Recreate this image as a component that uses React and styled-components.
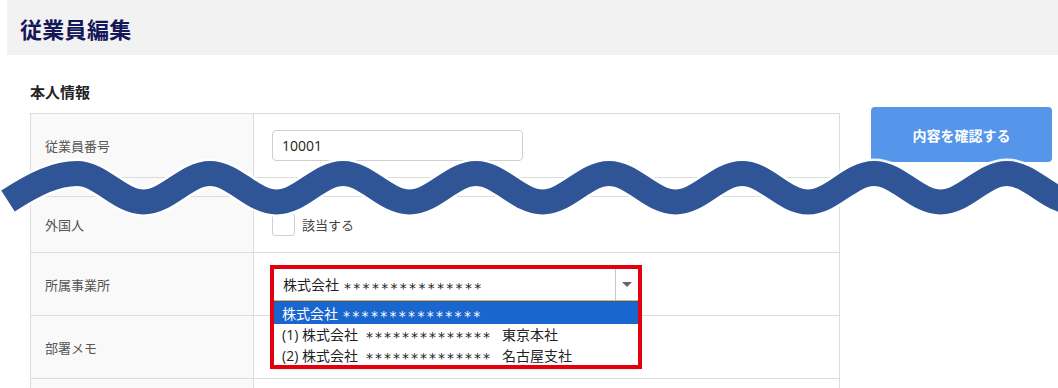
import React from "react";
import styled, { createGlobalStyle } from "styled-components";

const Global = createGlobalStyle`
  html, body { margin: 0; padding: 0; background: #fff; }
  body {
    font-family: "Open Sans", "Noto Sans CJK JP", sans-serif;
    color: #333;
    width: 1058px;
    height: 388px;
    overflow: hidden;
  }
  * { box-sizing: border-box; }
`;

const Page = styled.div`
  position: relative;
  width: 1058px;
  height: 388px;
  overflow: hidden;
`;

const Header = styled.header`
  margin-left: 7px;
  height: 55px;
  background: #f2f2f2;
  display: flex;
  align-items: center;
  padding-left: 13px;
`;

const Title = styled.h1`
  margin: 0;
  font-family: "Noto Sans CJK JP", sans-serif;
  font-size: 22px;
  font-weight: 700;
  color: #16165a;
  line-height: 1;
  letter-spacing: 0.3px;
`;

const Main = styled.main`
  display: flex;
  align-items: flex-start;
  padding-left: 30px;
`;

const FormColumn = styled.section`
  width: 810px;
`;

const SectionTitle = styled.h2`
  margin: 0;
  height: 58px;
  padding-top: 26px;
  font-family: "Noto Sans CJK JP", sans-serif;
  font-size: 15px;
  font-weight: 700;
  color: #222;
  line-height: 22px;
`;

const Table = styled.div`
  display: grid;
  grid-template-columns: 223px 1fr;
  border-left: 1px solid #dcdcdc;
  border-right: 1px solid #dcdcdc;
  border-top: 1px solid #dcdcdc;
`;

const Label = styled.div`
  height: ${(p) => p.$h}px;
  background: #f9f9f9;
  border-right: 1px solid #dcdcdc;
  border-bottom: 1px solid #dcdcdc;
  display: flex;
  align-items: center;
  padding-left: 14px;
  font-size: 13px;
  color: #555;
`;

const Value = styled.div`
  height: ${(p) => p.$h}px;
  border-bottom: 1px solid #dcdcdc;
  display: flex;
  align-items: center;
  padding-left: 18px;
  position: relative;
`;

const TextInput = styled.div`
  width: 251px;
  height: 31px;
  border: 1px solid #cfcfcf;
  border-radius: 4px;
  display: flex;
  align-items: center;
  padding-left: 9px;
  font-size: 14px;
  color: #222;
`;

const CheckRow = styled.label`
  display: flex;
  align-items: center;
  gap: 7px;
  font-size: 13px;
  color: #444;
`;

const CheckBox = styled.span`
  width: 23px;
  height: 23px;
  border: 1px solid #cfcfcf;
  border-radius: 3px;
  background: #fff;
`;

const SelectWrap = styled.div`
  position: relative;
  width: 366px;
  margin-left: 1px;
`;

const SelectBox = styled.div`
  height: 33px;
  border: 1px solid #bdbdbd;
  display: flex;
  align-items: center;
  font-size: 14px;
  color: #222;
  background: #fff;
`;

const SelectText = styled.span`
  flex: 1;
  padding-left: 9px;
  white-space: nowrap;
`;

const ArrowCell = styled.span`
  width: 23px;
  height: 100%;
  border-left: 1px solid #c8c8c8;
  display: flex;
  align-items: center;
  justify-content: center;
`;

const Arrow = styled.span`
  width: 0;
  height: 0;
  border-left: 5px solid transparent;
  border-right: 5px solid transparent;
  border-top: 5px solid #666;
`;

const Dropdown = styled.ul`
  position: absolute;
  top: 33px;
  left: 0;
  right: 0;
  margin: 0;
  padding: 0;
  list-style: none;
  background: #fff;
  border-top: 1px solid #555;
  box-shadow: 0 2px 4px rgba(0, 0, 0, 0.25);
  z-index: 2;
`;

const Option = styled.li`
  height: ${(p) => (p.$selected ? 22 : 21)}px;
  padding-left: 9px;
  display: flex;
  align-items: center;
  font-size: 14px;
  white-space: nowrap;
  background: ${(p) => (p.$selected ? "#1a66cf" : "#fff")};
  color: ${(p) => (p.$selected ? "#fff" : "#222")};
`;

const Mask = styled.span`
  font-family: "DejaVu Sans", sans-serif;
  font-size: 14px;
  letter-spacing: ${(p) => (p.$tight ? 2 : 2.3)}px;
  margin: 0 ${(p) => (p.$tight ? 10 : 2)}px 0 ${(p) => (p.$tight ? 8 : 5)}px;
  position: relative;
  top: 3px;
`;

const Frame = styled.div`
  position: absolute;
  left: -3px;
  right: -3px;
  top: -3px;
  height: 104px;
  border: 4px solid #e2000f;
  z-index: 3;
  pointer-events: none;
`;

const Aside = styled.aside`
  padding-left: 31px;
  padding-top: 52px;
`;

const ConfirmButton = styled.button`
  width: 181px;
  height: 55px;
  border: none;
  border-radius: 4px;
  background: #5596ea;
  color: #fff;
  font-family: "Noto Sans CJK JP", sans-serif;
  font-size: 14px;
  font-weight: 700;
`;

const WaveLayer = styled.svg`
  position: absolute;
  left: 0;
  top: 0;
  pointer-events: none;
  z-index: 5;
`;

function buildWave() {
  const peaks = [77, 210, 343, 476, 609, 742, 874, 1007, 1140];
  const yp = 173.5;
  const yt = 202;
  let d = `M 8 201 C 36 183, 56 ${yp}, 77 ${yp}`;
  for (let i = 0; i < peaks.length - 1; i++) {
    const a = peaks[i];
    const b = peaks[i + 1];
    const h = (b - a) / 2;
    const m = a + h;
    d += ` C ${a + h * 0.36} ${yp}, ${m - h * 0.36} ${yt}, ${m} ${yt}`;
    d += ` C ${m + h * 0.36} ${yt}, ${b - h * 0.36} ${yp}, ${b} ${yp}`;
  }
  return d;
}

const ROWS = [
  { label: "従業員番号", h: 64 },
  { label: "", h: 19 },
  { label: "外国人", h: 56 },
  { label: "所属事業所", h: 63 },
  { label: "部署メモ", h: 63 },
  { label: "", h: 40 },
];

export default function App() {
  const wave = buildWave();
  return (
    <Page>
      <Global />
      <Header>
        <Title>従業員編集</Title>
      </Header>
      <Main>
        <FormColumn>
          <SectionTitle>本人情報</SectionTitle>
          <Table>
            <Label $h={ROWS[0].h}>{ROWS[0].label}</Label>
            <Value $h={ROWS[0].h}>
              <TextInput>10001</TextInput>
            </Value>

            <Label $h={ROWS[1].h} />
            <Value $h={ROWS[1].h} />

            <Label $h={ROWS[2].h}>{ROWS[2].label}</Label>
            <Value $h={ROWS[2].h}>
              <CheckRow>
                <CheckBox />
                該当する
              </CheckRow>
            </Value>

            <Label $h={ROWS[3].h}>{ROWS[3].label}</Label>
            <Value $h={ROWS[3].h}>
              <SelectWrap>
                <SelectBox>
                  <SelectText>
                    株式会社<Mask>***************</Mask>
                  </SelectText>
                  <ArrowCell>
                    <Arrow />
                  </ArrowCell>
                </SelectBox>
                <Dropdown>
                  <Option $selected>
                    株式会社<Mask>***************</Mask>
                  </Option>
                  <Option>
                    (1) 株式会社<Mask $tight>**************</Mask>東京本社
                  </Option>
                  <Option>
                    (2) 株式会社<Mask $tight>**************</Mask>名古屋支社
                  </Option>
                </Dropdown>
                <Frame />
              </SelectWrap>
            </Value>

            <Label $h={ROWS[4].h}>{ROWS[4].label}</Label>
            <Value $h={ROWS[4].h} />

            <Label $h={ROWS[5].h} />
            <Value $h={ROWS[5].h} />
          </Table>
        </FormColumn>
        <Aside>
          <ConfirmButton>内容を確認する</ConfirmButton>
        </Aside>
      </Main>
      <WaveLayer width="1058" height="388" viewBox="0 0 1058 388">
        <path d={wave} fill="none" stroke="#ffffff" strokeWidth="30" strokeLinecap="butt" opacity="0.9" />
        <path d={wave} fill="none" stroke="#2f5597" strokeWidth="25" strokeLinecap="butt" />
      </WaveLayer>
    </Page>
  );
}
